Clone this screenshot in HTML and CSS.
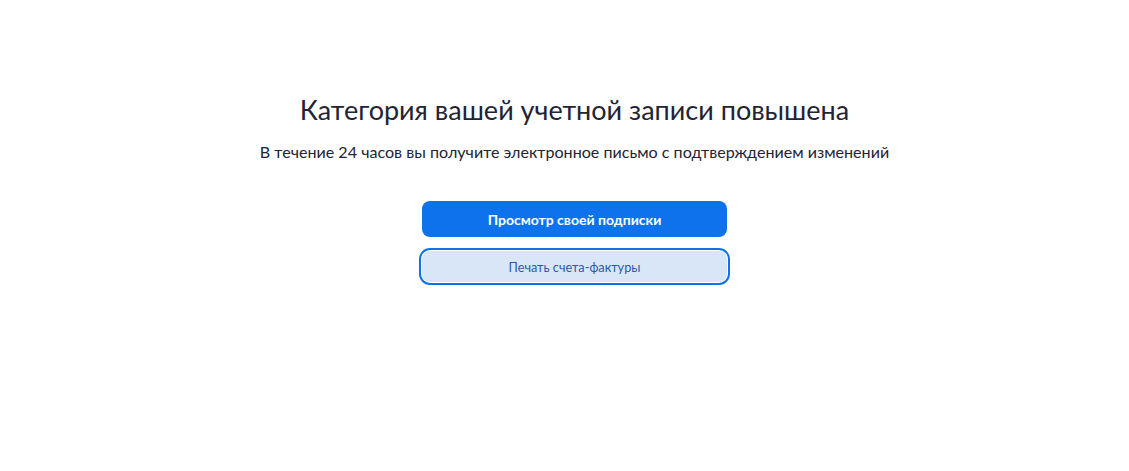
FILE: index.html
```html
<!DOCTYPE html>
<html lang="ru">
<head>
<meta charset="utf-8">
<link rel="stylesheet" href="styles.css">
</head>
<body>
<main class="page">
  <h1 class="title">Категория вашей учетной записи повышена</h1>
  <p class="subtitle">В течение 24 часов вы получите электронное письмо с подтверждением изменений</p>
  <div class="actions">
    <button class="btn btn-primary">Просмотр своей подписки</button>
    <button class="btn btn-secondary">Печать счета-фактуры</button>
  </div>
</main>
</body>
</html>
```
FILE: styles.css
```css
html, body {
  margin: 0;
  padding: 0;
  background: #fff;
}
body {
  font-family: Lato, "Noto Sans", sans-serif;
  color: #232333;
  min-height: 471px;
}
.page {
  display: flex;
  flex-direction: column;
  align-items: center;
  padding: 92px 0 60px 20px;
}
.title {
  margin: 0;
  font-size: 27px;
  font-weight: 400;
  line-height: 36px;
  color: #232333;
}
.subtitle {
  margin: 12px 0 0;
  font-size: 16.1px;
  line-height: 24px;
}
.actions {
  margin-top: 37px;
  display: flex;
  flex-direction: column;
  align-items: center;
  gap: 14px;
}
.btn {
  width: 305px;
  border: none;
  border-radius: 8px;
  font-family: Lato, "Noto Sans", sans-serif;
  cursor: pointer;
}
.btn-primary {
  height: 36px;
  background: #0e72ed;
  color: #fff;
  font-size: 14px;
  font-weight: 700;
}
.btn-secondary {
  height: 31px;
  background: #d8e6f8;
  color: #2d5aa8;
  font-size: 12.7px;
  outline: 2px solid #0e72ed;
  outline-offset: 1px;
}
```
